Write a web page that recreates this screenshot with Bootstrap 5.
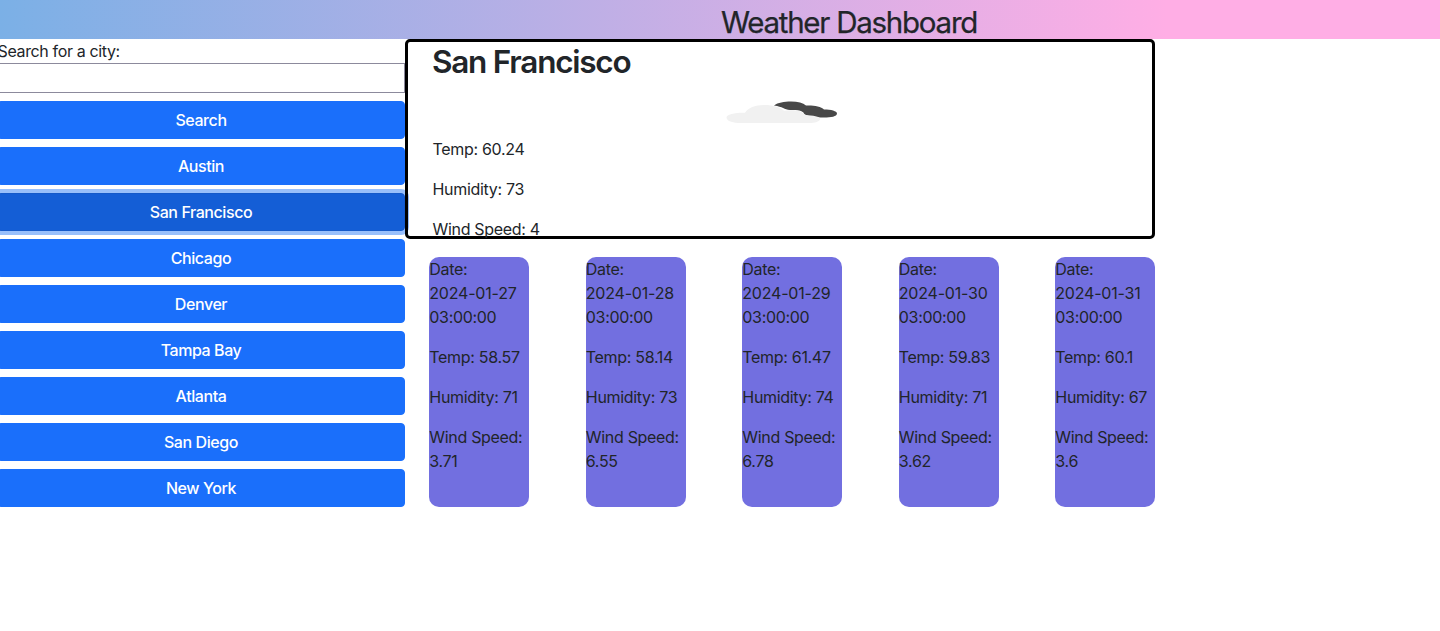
<!DOCTYPE html>
<html lang="en">
<head>
<meta charset="utf-8">
<meta name="viewport" content="width=device-width, initial-scale=1">
<title>Weather Dashboard</title>
<link href="https://cdn.jsdelivr.net/npm/bootstrap@5.3.0/dist/css/bootstrap.min.css" rel="stylesheet">
<style>
body { font-family: Inter, "Liberation Sans", sans-serif; color: #212529; letter-spacing: -.31px; overflow-x: hidden; }
.topbar { height: 39px; background: linear-gradient(90deg, #7bb0e6, #ffaee5 81%); padding-left: 258px; }
.topbar h1 { font-size: 29.5px; line-height: 45px; font-weight: 400; letter-spacing: -1.25px; -webkit-text-stroke: .25px #212529; }
.sidebar { width: 408px; margin-left: -3px; }
.sidebar label { padding-left: .5px; letter-spacing: -.36px; }
.sidebar input { height: 30px; border: 1px solid #8c8a9c; border-radius: 0; }
.sidebar .btn { --bs-btn-bg: #1a6ffb; --bs-btn-border-color: #1a6ffb; --bs-btn-border-radius: 4px; height: 38px; font-weight: 500; letter-spacing: -.42px; }
.sidebar .btn.picked { background: #145ed6; border-color: #1459ca; box-shadow: 0 0 0 4px #98bffb; }
.main-col { width: 750px; }
.today { height: 200px; border: 3px solid #000; border-radius: 5px; }
.today h2 { font-size: 31.5px; font-weight: 600; letter-spacing: -1.25px; line-height: 38.4px; padding-top: 1px; }
.today svg { height: 47.6px; }
.today p { padding-left: .5px; }
.forecast { padding-top: 18px; }
.day { width: 100px; height: 250px; border-radius: 10px; background: #726fe0; }
.day p { padding-left: .3px; }
.day time { white-space: nowrap; letter-spacing: -.2px; }
</style>
</head>
<body>
<header class="topbar text-center"><h1 class="mb-0">Weather Dashboard</h1></header>
<div class="d-flex">
  <aside class="sidebar d-flex flex-column flex-shrink-0">
    <label for="city">Search for a city:</label>
    <input id="city" type="text" class="w-100 mb-2">
    <div class="d-grid gap-2">
      <button class="btn btn-primary">Search</button>
      <button class="btn btn-primary">Austin</button>
      <button class="btn btn-primary picked">San Francisco</button>
      <button class="btn btn-primary">Chicago</button>
      <button class="btn btn-primary">Denver</button>
      <button class="btn btn-primary">Tampa Bay</button>
      <button class="btn btn-primary">Atlanta</button>
      <button class="btn btn-primary">San Diego</button>
      <button class="btn btn-primary">New York</button>
    </div>
  </aside>
  <main class="main-col position-relative flex-shrink-0">
    <section class="today px-4">
      <h2 class="mb-2">San Francisco</h2>
      <svg class="d-block w-100" viewBox="432 89 696 47.6" preserveAspectRatio="none" aria-hidden="true">
        <path fill="#484848" d="M774 105.500C778 102.500 784 101.500 791 101.500C798 101.500 803 103 806 105.500C813 105.200 821 106 824 109.500C831 109.500 837 111 837 113.500C837 116.500 831 117.500 824 117.500C815 117.300 808 116.500 804 114C804 111 798 109.500 790 110C784 109.500 783 106.800 774 105.500Z"/>
        <path fill="#f1f1f1" d="M738 123C731 122.500 726.500 120.500 726.500 117.500C726.500 114.500 735 112.500 745 112.700C748 108 755 105 764 105C774 105 781 107.500 784 110.800C793 109.500 803 110.500 805 115C813 115.300 820 116.500 820 119C820 121.500 815 123 809 123Z"/>
      </svg>
      <p>Temp: 60.24</p>
      <p>Humidity: 73</p>
      <p class="mb-0">Wind Speed: 4</p>
    </section>
    <section class="forecast ps-4 d-flex justify-content-between">
      <div class="day"><p>Date: <time>2024-01-27</time> 03:00:00</p><p>Temp: 58.57</p><p>Humidity: 71</p><p>Wind Speed: 3.71</p></div>
      <div class="day"><p>Date: <time>2024-01-28</time> 03:00:00</p><p>Temp: 58.14</p><p>Humidity: 73</p><p>Wind Speed: 6.55</p></div>
      <div class="day"><p>Date: <time>2024-01-29</time> 03:00:00</p><p>Temp: 61.47</p><p>Humidity: 74</p><p>Wind Speed: 6.78</p></div>
      <div class="day"><p>Date: <time>2024-01-30</time> 03:00:00</p><p>Temp: 59.83</p><p>Humidity: 71</p><p>Wind Speed: 3.62</p></div>
      <div class="day"><p>Date: <time>2024-01-31</time> 03:00:00</p><p>Temp: 60.1</p><p>Humidity: 67</p><p>Wind Speed: 3.6</p></div>
    </section>
  </main>
</div>
<script src="https://cdn.jsdelivr.net/npm/bootstrap@5.3.0/dist/js/bootstrap.bundle.min.js"></script>
</body>
</html>
